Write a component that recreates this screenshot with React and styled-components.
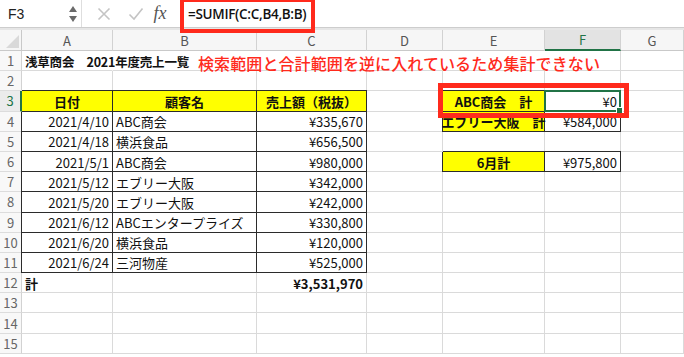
import React from 'react';
import styled, { createGlobalStyle } from 'styled-components';

const RED = '#ff2a1c';
const GRID = '#dadada';
const DARK = '#2b2b2b';
const GREEN = '#217346';
const YELLOW = '#ffff00';
const JP = '"Noto Sans CJK JP", "Noto Sans", sans-serif';

const GlobalStyle = createGlobalStyle`
  html, body { margin: 0; padding: 0; background: #fff; }
  body { font-family: ${JP}; }
`;

const Page = styled.div`
  position: relative;
  width: 684px;
  height: 357px;
  overflow: hidden;
  background: #fff;
`;

const FormulaBar = styled.div`
  display: flex;
  align-items: center;
  height: 27px;
  background: #fff;
  border-bottom: 1px solid #cdcdcd;
`;

const NameBox = styled.div`
  box-sizing: border-box;
  width: 82px;
  height: 100%;
  display: flex;
  align-items: center;
  justify-content: space-between;
  padding: 0 3px 0 8px;
  border-right: 1px solid #dedede;
  font-family: "Liberation Sans", sans-serif;
  font-size: 14px;
  color: #222;
`;

const ToolIcon = styled.span`
  width: ${p => p.$w || 32}px;
  display: flex;
  justify-content: center;
  align-items: center;
`;

const Fx = styled.span`
  width: 28px;
  text-align: center;
  font-family: "Liberation Serif", serif;
  font-style: italic;
  font-size: 18px;
  color: #555;
`;

const Formula = styled.div`
  margin-left: 14px;
  font-family: "Open Sans", "Liberation Sans", sans-serif;
  font-size: 13.5px;
  font-weight: 600;
  color: #111;
  letter-spacing: -0.3px;
`;

const Band = styled.div`
  height: 2px;
  background: #e6e6e6;
`;

const Sheet = styled.div`
  display: grid;
  grid-template-columns: 22px 91px 144px 110px 76px 102px 76px 1fr;
  grid-template-rows: 21px repeat(15, 20.2px);
`;

const Corner = styled.div`
  box-sizing: border-box;
  background: #f6f6f6;
  border-right: 1px solid #c9c9c9;
  border-bottom: 1px solid #c9c9c9;
  display: flex;
  align-items: flex-end;
  justify-content: flex-end;
  padding: 0 2px 2px 0;
`;

const ColHead = styled.div`
  box-sizing: border-box;
  display: flex;
  align-items: center;
  justify-content: center;
  font-size: 13px;
  color: ${p => (p.$active ? GREEN : '#555')};
  background: ${p => (p.$active ? '#e3e3e3' : '#f6f6f6')};
  border-right: 1px solid #d2d2d2;
  border-bottom: ${p => (p.$active ? `2px solid ${GREEN}` : '1px solid #c9c9c9')};
`;

const RowHead = styled.div`
  box-sizing: border-box;
  display: flex;
  align-items: center;
  justify-content: center;
  font-size: 13px;
  color: ${p => (p.$active ? GREEN : '#666')};
  background: ${p => (p.$active ? '#ebebeb' : '#f8f8f8')};
  border-right: ${p => (p.$active ? `2px solid ${GREEN}` : '1px solid #d2d2d2')};
  border-bottom: 1px solid #dcdcdc;
`;

const shadow = p => {
  const s = [];
  if (p.$top) s.push(`0 -1px 0 ${DARK}`);
  if (p.$left) s.push(`-1px 0 0 ${DARK}`);
  return s.length ? `box-shadow: ${s.join(', ')};` : '';
};

const Cell = styled.div`
  box-sizing: border-box;
  position: relative;
  display: flex;
  align-items: center;
  justify-content: ${p =>
    p.$align === 'right' ? 'flex-end' : p.$align === 'center' ? 'center' : 'flex-start'};
  padding: 1px 3px 0;
  white-space: nowrap;
  font-size: ${p => (p.$title ? '12.5px' : '13px')};
  letter-spacing: ${p => (p.$title ? '-0.2px' : 'normal')};
  font-weight: ${p => (p.$bold ? 700 : 400)};
  color: #111;
  background: ${p => p.$fill || 'transparent'};
  border-right: 1px solid ${p => (p.$box ? DARK : p.$spill ? 'transparent' : GRID)};
  border-bottom: 1px solid ${p => (p.$box ? DARK : GRID)};
  ${shadow}
  ${p =>
    p.$selected
      ? `
    &::before {
      content: '';
      position: absolute;
      left: -1px; top: -1px; right: -1px; bottom: -1px;
      border: 2px solid ${GREEN};
    }
    &::after {
      content: '';
      position: absolute;
      right: -3px; bottom: -3px;
      width: 5px; height: 5px;
      background: ${GREEN};
      border: 1px solid #fff;
      z-index: 1;
    }
  `
      : ''}
`;

const Frame = styled.div`
  position: absolute;
  left: ${p => p.$x}px;
  top: ${p => p.$y}px;
  width: ${p => p.$w}px;
  height: ${p => p.$h}px;
  box-sizing: border-box;
  border: ${p => p.$t}px solid ${RED};
  pointer-events: none;
  z-index: 5;
`;

const Note = styled.div`
  position: absolute;
  left: 198px;
  top: 52px;
  height: 21px;
  display: flex;
  align-items: center;
  font-size: 16px;
  font-weight: 500;
  color: ${RED};
  white-space: nowrap;
  letter-spacing: 0.1px;
  z-index: 4;
`;

const COLS = ['A', 'B', 'C', 'D', 'E', 'F', 'G'];

const Y = { $fill: YELLOW, $bold: true, $align: 'center' };
const R = { $align: 'right' };

const data = {
  1: {
    A: { t: '浅草商会　2021年度売上一覧', $bold: true, $spill: true, $title: true },
    B: { $spill: true },
    C: { $spill: true },
    D: { $spill: true },
    E: { $spill: true },
  },
  3: {
    A: { t: '日付', ...Y },
    B: { t: '顧客名', ...Y },
    C: { t: '売上額（税抜）', ...Y },
    E: { t: 'ABC商会　計', ...Y },
    F: { t: '¥0', ...R, $selected: true },
  },
  4: { A: '2021/4/10', B: 'ABC商会', C: '¥335,670', E: { t: 'エブリー大阪　計', ...Y }, F: { t: '¥584,000', ...R } },
  5: { A: '2021/4/18', B: '横浜食品', C: '¥656,500' },
  6: { A: '2021/5/1', B: 'ABC商会', C: '¥980,000', E: { t: '6月計', ...Y }, F: { t: '¥975,800', ...R } },
  7: { A: '2021/5/12', B: 'エブリー大阪', C: '¥342,000' },
  8: { A: '2021/5/20', B: 'エブリー大阪', C: '¥242,000' },
  9: { A: '2021/6/12', B: 'ABCエンタープライズ', C: '¥330,800' },
  10: { A: '2021/6/20', B: '横浜食品', C: '¥120,000' },
  11: { A: '2021/6/24', B: '三河物産', C: '¥525,000' },
  12: { A: { t: '計', $bold: true }, C: { t: '¥3,531,970', $bold: true, $align: 'right' } },
};

const boxFor = (row, col) => {
  const inMain = row >= 3 && row <= 11 && ['A', 'B', 'C'].includes(col);
  const inSide = (row === 3 || row === 4 || row === 6) && ['E', 'F'].includes(col);
  if (!(inMain || inSide)) return {};
  return {
    $box: true,
    $top: row === 3 || (inSide && row === 6),
    $left: (col === 'A' && row !== 3) || col === 'E',
  };
};

const specFor = (row, col) => {
  const raw = data[row] && data[row][col];
  let spec = {};
  if (typeof raw === 'string') {
    spec = { t: raw, $align: col === 'B' ? 'left' : 'right' };
  } else if (raw) {
    spec = { ...raw };
  }
  return { ...boxFor(row, col), ...spec };
};

const Spinner = () => (
  <svg width="10" height="22" viewBox="0 0 10 22">
    <path d="M5 3 L9 9 L1 9 Z" fill="#6a6a6a" />
    <path d="M5 19 L9 13 L1 13 Z" fill="#6a6a6a" />
  </svg>
);

const Cross = () => (
  <svg width="14" height="14" viewBox="0 0 14 14">
    <path d="M1.5 1.5 L12.5 12.5 M12.5 1.5 L1.5 12.5" stroke="#c4c4c4" strokeWidth="1.6" fill="none" />
  </svg>
);

const Check = () => (
  <svg width="16" height="14" viewBox="0 0 16 14">
    <path d="M1.5 7.5 L6 12 L14.5 1.5" stroke="#c4c4c4" strokeWidth="1.6" fill="none" />
  </svg>
);

const CornerMark = () => (
  <svg width="13" height="13" viewBox="0 0 13 13">
    <path d="M13 0 L13 13 L0 13 Z" fill="#d9d9d9" />
  </svg>
);

export default function App() {
  const rows = Array.from({ length: 15 }, (_, i) => i + 1);
  return (
    <>
      <GlobalStyle />
      <Page>
        <FormulaBar>
          <NameBox>
            F3
            <Spinner />
          </NameBox>
          <ToolIcon $w={44}>
            <Cross />
          </ToolIcon>
          <ToolIcon $w={20}>
            <Check />
          </ToolIcon>
          <Fx>fx</Fx>
          <Formula>=SUMIF(C:C,B4,B:B)</Formula>
        </FormulaBar>
        <Band />
        <Sheet>
          <Corner>
            <CornerMark />
          </Corner>
          {COLS.map(c => (
            <ColHead key={c} $active={c === 'F'}>
              {c}
            </ColHead>
          ))}
          {rows.map(r => (
            <React.Fragment key={r}>
              <RowHead $active={r === 3}>{r}</RowHead>
              {COLS.map(c => {
                const { t, ...props } = specFor(r, c);
                return (
                  <Cell key={c} {...props}>
                    {t}
                  </Cell>
                );
              })}
            </React.Fragment>
          ))}
        </Sheet>
        <Note>検索範囲と合計範囲を逆に入れているため集計できない</Note>
        <Frame $x={180} $y={-2} $w={135} $h={35} $t={4} />
        <Frame $x={438} $y={83} $w={191} $h={35} $t={5} />
      </Page>
    </>
  );
}
